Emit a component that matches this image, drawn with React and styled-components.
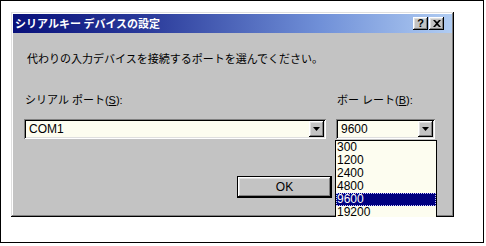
import React from "react";
import styled, { createGlobalStyle } from "styled-components";

const GlobalStyle = createGlobalStyle`
  body {
    margin: 0;
    background: #fff;
  }
`;

const raised = `
  box-shadow: inset -1px -1px #000, inset 1px 1px #fff, inset -2px -2px #808080, inset 2px 2px #dfdfdf;
`;

export default function App() {
  const rates = ["300", "1200", "2400", "4800", "9600", "19200"];
  return (
    <>
      <GlobalStyle />
      <Frame>
        <Dialog>
          <TitleBar>
            <TitleText>シリアルキー デバイスの設定</TitleText>
            <TitleButton>?</TitleButton>
            <TitleButton>
              <svg width="8" height="7" viewBox="0 0 8 7">
                <path d="M0 0h2l2 2 2-2h2L5 3.5 8 7H6L4 5 2 7H0l3-3.5z" fill="#000" />
              </svg>
            </TitleButton>
          </TitleBar>
          <Content>
            <Message>代わりの入力デバイスを接続するポートを選んでください。</Message>
            <FieldGrid>
              <Label>
                シリアル ポート(<u>S</u>):
              </Label>
              <Label>
                ボー レート(<u>B</u>):
              </Label>
              <Combo>
                <ComboValue>COM1</ComboValue>
                <DropButton>
                  <Arrow />
                </DropButton>
              </Combo>
              <Combo>
                <ComboValue>9600</ComboValue>
                <DropButton>
                  <Arrow />
                </DropButton>
                <DropList>
                  {rates.map((r) => (
                    <ListItem key={r} $selected={r === "9600"}>
                      {r}
                    </ListItem>
                  ))}
                </DropList>
              </Combo>
            </FieldGrid>
            <ButtonRow>
              <Button $default>OK</Button>
            </ButtonRow>
          </Content>
        </Dialog>
      </Frame>
    </>
  );
}

function Arrow() {
  return (
    <svg width="7" height="4" viewBox="0 0 7 4">
      <path d="M0 0h7L3.5 4z" fill="#000" />
    </svg>
  );
}

const Frame = styled.div`
  width: 484px;
  height: 243px;
  box-sizing: border-box;
  border: 1px solid #000;
  padding: 11px 0 0 10px;
  overflow: hidden;
`;

const Dialog = styled.div`
  width: 443px;
  height: 205px;
  box-sizing: border-box;
  padding: 2px;
  background: #c3c3c3;
  box-shadow: inset -1px -1px #000, inset 1px 1px #dfdfdf, inset -2px -2px #808080, inset 2px 2px #fff;
  overflow: hidden;
  display: flex;
  flex-direction: column;
`;

const TitleBar = styled.div`
  height: 19px;
  display: flex;
  align-items: center;
  gap: 1px;
  padding: 0 8px 0 2px;
  background: linear-gradient(to right, #08107a, #2a3a9a 30%, #7090d8 70%, #b0ccf2);
`;

const TitleText = styled.span`
  flex: 1;
  color: #fff;
  font: bold 11px/13px "Noto Sans CJK JP", sans-serif;
`;

const TitleButton = styled.span`
  width: 15px;
  height: 13px;
  box-sizing: border-box;
  display: flex;
  align-items: center;
  justify-content: center;
  background: #c3c3c3;
  ${raised}
  font: bold 11px/11px "Liberation Sans", sans-serif;
  color: #000;
`;

const Content = styled.div`
  display: flex;
  flex-direction: column;
  padding: 0 15px 0 11px;
`;

const Message = styled.div`
  margin-top: 19px;
  padding-left: 3px;
  font: 11px/13px "Noto Sans CJK JP", sans-serif;
  color: #000;
`;

const FieldGrid = styled.div`
  margin-top: 29px;
  display: grid;
  grid-template-columns: 302px 99px;
  column-gap: 10px;
  row-gap: 12px;
`;

const Label = styled.div`
  padding-left: 1px;
  font: 11px/13px "Liberation Sans", "Noto Sans CJK JP", sans-serif;
  color: #000;
  u {
    text-underline-offset: 1px;
  }
`;

const Combo = styled.div`
  position: relative;
  height: 20px;
  box-sizing: border-box;
  padding: 2px;
  display: flex;
  background: #fdfdf0;
  box-shadow: inset 1px 1px #808080, inset -1px -1px #fff, inset 2px 2px #000, inset -2px -2px #dfdfdf;
`;

const ComboValue = styled.span`
  flex: 1;
  padding-left: 3px;
  font: 12px/16px "Liberation Sans", sans-serif;
  color: #000;
`;

const DropButton = styled.span`
  width: 15px;
  display: flex;
  align-items: center;
  justify-content: center;
  background: #c3c3c3;
  ${raised}
`;

const DropList = styled.div`
  position: absolute;
  top: calc(100% + 1px);
  left: -1px;
  right: -2px;
  z-index: 2;
  border: 1px solid #000;
  background: #fdfdf0;
`;

const ListItem = styled.div`
  height: 13px;
  padding-left: 1px;
  font: 12px/13px "Liberation Sans", sans-serif;
  color: ${(p) => (p.$selected ? "#fff" : "#000")};
  background: ${(p) => (p.$selected ? "#000080" : "transparent")};
  outline: ${(p) => (p.$selected ? "1px dotted #c8c8ff" : "none")};
  outline-offset: -1px;
`;

const ButtonRow = styled.div`
  margin-top: 37px;
  padding-right: 105px;
  display: flex;
  justify-content: flex-end;
`;

const Button = styled.button`
  width: 95px;
  height: 22px;
  box-sizing: border-box;
  padding: 0;
  background: #c3c3c3;
  border: ${(p) => (p.$default ? "1px solid #000" : "none")};
  ${raised}
  font: 12px/18px "Liberation Sans", "Noto Sans CJK JP", sans-serif;
  color: #000;
`;
